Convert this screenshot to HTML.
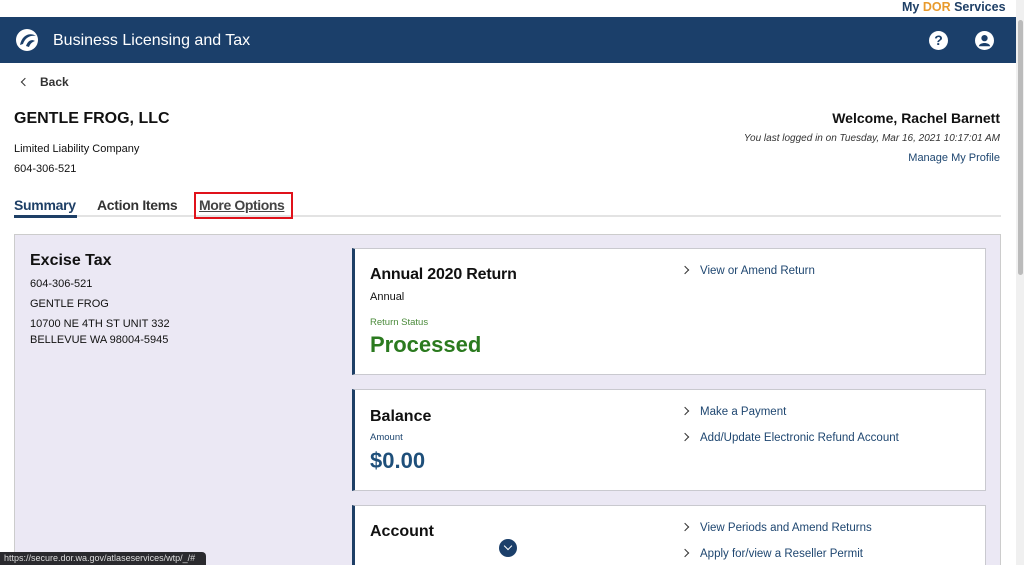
<!DOCTYPE html>
<html style="overflow:hidden;height:565px"><head><style>
*{margin:0;padding:0;box-sizing:border-box}
body{width:1024px;height:565px;overflow:hidden;background:#fff;font-family:"Liberation Sans",sans-serif;position:relative;color:#111}
.a{position:absolute;white-space:nowrap}
.lnk{color:#1e4670;font-size:11.5px}
.card{position:absolute;left:352px;width:634px;background:#fff;border:1px solid #c9c9cf;border-left:3px solid #1e3f66}
.chev{display:inline-block;width:6px;height:6px;border-right:1.5px solid #333;border-top:1.5px solid #333;transform:rotate(45deg);margin-right:12px;position:relative;top:-1px}
</style></head><body>
<div class="a" style="left:902px;top:0;font-size:12.5px;font-weight:bold;color:#1e3f66">My <span style="color:#e89a2c">DOR</span> Services</div>
<div class="a" style="left:0;top:17px;width:1016px;height:46px;background:#1b3f6a"></div>
<svg class="a" style="left:14px;top:27px" width="26" height="26" viewBox="0 0 26 26"><circle cx="13" cy="13" r="11" fill="#fff"/><path d="M6 18 C8 8 16 5 22 9 C16 8 11 11 9 17Z M12 19 C14 13 18 12 21 14 C18 15 16 17 15 20Z" fill="#1b3f6a"/></svg>
<div class="a" style="left:53px;top:32px;font-size:16px;color:#fff">Business Licensing and Tax</div>
<div class="a" style="left:929px;top:31px;width:19px;height:19px;border-radius:50%;background:#fff;color:#1b3f6a;font-weight:bold;font-size:14px;text-align:center;line-height:19px">?</div>
<svg class="a" style="left:975px;top:31px" width="19" height="19" viewBox="0 0 20 20"><circle cx="10" cy="10" r="10" fill="#fff"/><circle cx="10" cy="7.5" r="3.3" fill="#1b3f6a"/><path d="M4 16 C5 11.5 15 11.5 16 16 Z" fill="#1b3f6a"/></svg>
<div class="a" style="left:1016px;top:0;width:8px;height:565px;background:#f0f0f0"></div>
<div class="a" style="left:1018px;top:20px;width:5px;height:255px;background:#bbb;border-radius:3px"></div>
<div class="a" style="left:22px;top:75px;font-size:12px;font-weight:bold;color:#333"><span class="chev" style="transform:rotate(-135deg);margin-right:12px"></span>Back</div>
<div class="a" style="left:14px;top:110px;font-size:16px;font-weight:bold">GENTLE FROG, LLC</div>
<div class="a" style="left:14px;top:143px;font-size:11px">Limited Liability Company</div>
<div class="a" style="left:14px;top:163px;font-size:11px">604-306-521</div>
<div class="a" style="right:24px;top:110px;font-size:14px;font-weight:bold">Welcome, Rachel Barnett</div>
<div class="a" style="right:24px;top:133px;font-size:10px;font-style:italic;color:#333">You last logged in on Tuesday, Mar 16, 2021 10:17:01 AM</div>
<div class="a lnk" style="right:24px;top:152px;font-size:11px">Manage My Profile</div>
<div class="a" style="left:14px;top:215px;width:987px;height:2px;background:#e3e3e3"></div>
<div class="a" style="left:14px;top:197px;font-size:14px;font-weight:bold;color:#1e3f66;letter-spacing:-0.3px">Summary</div>
<div class="a" style="left:14px;top:215px;width:63px;height:3px;background:#1e3f66"></div>
<div class="a" style="left:97px;top:197px;font-size:14px;font-weight:bold;color:#333;letter-spacing:-0.3px">Action Items</div>
<div class="a" style="left:194px;top:192px;width:99px;height:27px;border:2px solid #e0121b"></div>
<div class="a" style="left:199px;top:197px;font-size:14px;font-weight:bold;color:#444;text-decoration:underline;letter-spacing:-0.4px">More Options</div>
<div class="a" style="left:14px;top:234px;width:987px;height:340px;background:#ebe8f4;border:1px solid #ccc"></div>
<div class="a" style="left:30px;top:252px;font-size:16px;font-weight:bold">Excise Tax</div>
<div class="a" style="left:30px;top:278px;font-size:11px">604-306-521</div>
<div class="a" style="left:30px;top:298px;font-size:11px">GENTLE FROG</div>
<div class="a" style="left:30px;top:318px;font-size:11px">10700 NE 4TH ST UNIT 332</div>
<div class="a" style="left:30px;top:334px;font-size:11px">BELLEVUE WA 98004-5945</div>
<div class="card" style="top:248px;height:127px"></div>
<div class="a" style="left:370px;top:266px;font-size:16px;font-weight:bold;letter-spacing:-0.2px">Annual 2020 Return</div>
<div class="a" style="left:370px;top:291px;font-size:11px">Annual</div>
<div class="a" style="left:370px;top:317px;font-size:9.5px;color:#4a8a3a">Return Status</div>
<div class="a" style="left:370px;top:332px;font-size:22px;font-weight:bold;color:#2b7a1f">Processed</div>
<div class="a lnk" style="left:682px;top:265px"><span class="chev"></span>View or Amend Return</div>
<div class="card" style="top:389px;height:102px"></div>
<div class="a" style="left:370px;top:408px;font-size:16px;font-weight:bold">Balance</div>
<div class="a" style="left:370px;top:432px;font-size:9.5px;color:#1e4670">Amount</div>
<div class="a" style="left:370px;top:448px;font-size:22px;font-weight:bold;color:#1e4f7a">$0.00</div>
<div class="a lnk" style="left:682px;top:406px"><span class="chev"></span>Make a Payment</div>
<div class="a lnk" style="left:682px;top:432px"><span class="chev"></span>Add/Update Electronic Refund Account</div>
<div class="card" style="top:505px;height:70px"></div>
<div class="a" style="left:370px;top:523px;font-size:16px;font-weight:bold">Account</div>
<div class="a lnk" style="left:682px;top:522px"><span class="chev"></span>View Periods and Amend Returns</div>
<div class="a lnk" style="left:682px;top:548px"><span class="chev"></span>Apply for/view a Reseller Permit</div>
<div class="a" style="left:499px;top:539px;width:18px;height:18px;border-radius:50%;background:#1b3f6a"></div>
<div class="a" style="left:505px;top:543px;width:6px;height:6px;border-right:1.5px solid #fff;border-bottom:1.5px solid #fff;transform:rotate(45deg)"></div>
<div class="a" style="left:0;top:552px;width:206px;height:13px;background:#2a2a2e;border-radius:0 4px 0 0;color:#ddd;font-size:9px;padding:1px 4px">https://secure.dor.wa.gov/atlaseservices/wtp/_/#</div>
</body></html>
